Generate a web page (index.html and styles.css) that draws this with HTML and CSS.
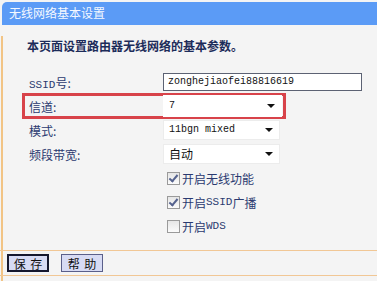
FILE: index.html
```html
<!DOCTYPE html>
<html lang="zh-CN">
<head>
  <meta charset="utf-8"/>
  <title>无线网络基本设置</title>
  <link rel="stylesheet" href="styles.css">
</head>
<body>
  <div class="title">无线网络基本设置</div>
  <div class="panel">
    <p class="intro">本页面设置路由器无线网络的基本参数。</p>
    <div class="form">
      <div class="row">
        <span class="label"><span class="mono">SSID</span>号:</span>
        <span class="input">zonghejiaofei88816619</span>
      </div>
      <div class="row mark">
        <span class="label">信道:</span>
        <span class="select wide">7<i class="arrow"></i></span>
      </div>
      <div class="row">
        <span class="label">模式:</span>
        <span class="select">11bgn mixed<i class="arrow"></i></span>
      </div>
      <div class="row">
        <span class="label">频段带宽:</span>
        <span class="select cn">自动<i class="arrow"></i></span>
      </div>
      <div class="row">
        <span class="label"></span>
        <label class="check"><span class="box on"></span>开启无线功能</label>
      </div>
      <div class="row">
        <span class="label"></span>
        <label class="check"><span class="box on"></span>开启<span class="mono">SSID</span>广播</label>
      </div>
      <div class="row">
        <span class="label"></span>
        <label class="check"><span class="box"></span>开启<span class="mono">WDS</span></label>
      </div>
    </div>
    <div class="actions">
      <button class="btn main">保 存</button>
      <button class="btn">帮 助</button>
    </div>
  </div>
</body>
</html>
```

FILE: styles.css
```css
body {
  margin: 0;
  padding-top: 2px;
  background-color: #f4f4f4;
  font-family: "Noto Sans CJK SC", "Liberation Sans", sans-serif;
  font-size: 12px;
  color: #2b3a70;
}
.title {
  height: 23px;
  line-height: 22px;
  margin-left: 2px;
  padding-left: 7px;
  background-color: #5b9bf6;
  border-top-left-radius: 5px;
  color: #f4f8ff;
  font-size: 12px;
}
.panel {
  margin-left: 1px;
  border-left: 2px solid #f2c485;
  padding-bottom: 5px;
}
.intro {
  margin: 11px 0 0 24px;
  line-height: 20px;
  font-weight: bold;
  color: #1d2c5a;
}
.form {
  margin-top: 14px;
}
.row {
  display: flex;
  align-items: center;
  height: 24px;
  margin-left: 20px;
  padding-left: 6px;
}
.row.mark {
  width: 256px;
  outline: 3px solid #d8434a;
  outline-offset: -2px;
}
.label {
  width: 134px;
  flex-shrink: 0;
}
.label .mono {
  font-size: 11px;
}
.input {
  flex-shrink: 0;
  box-sizing: border-box;
  width: 199px;
  height: 18px;
  padding-left: 4px;
  border: 1px solid #5c6273;
  background: #fff;
  font-family: "Liberation Mono", monospace;
  font-size: 10px;
  line-height: 16px;
  color: #111;
}
.select {
  position: relative;
  flex-shrink: 0;
  box-sizing: border-box;
  width: 117px;
  height: 20px;
  padding-left: 5px;
  background: #fff;
  border: 1px solid #ececec;
  font-family: "Liberation Mono", monospace;
  font-size: 10px;
  line-height: 18px;
  color: #111;
}
.select.wide {
  width: 119px;
  height: 22px;
  line-height: 20px;
  border-color: #fff;
}
.select.cn {
  font-family: "Noto Sans CJK SC", sans-serif;
  font-size: 12px;
}
.arrow {
  position: absolute;
  right: 6px;
  top: 50%;
  margin-top: -2px;
  border-left: 4px solid transparent;
  border-right: 4px solid transparent;
  border-top: 4px solid #111;
}
.check {
  display: flex;
  align-items: center;
  margin-left: 4px;
  color: #2b3a70;
}
.box {
  box-sizing: border-box;
  width: 13px;
  height: 13px;
  margin-right: 2px;
  border: 1px solid #9a9a9a;
  background: linear-gradient(#e6e6e6, #fbfbfb);
  position: relative;
}
.box.on::after {
  content: "";
  position: absolute;
  left: 3px;
  top: 0px;
  width: 3px;
  height: 7px;
  border-right: 2px solid #55628e;
  border-bottom: 2px solid #55628e;
  transform: rotate(40deg);
}
.mono {
  font-family: "Liberation Mono", monospace;
  font-size: 11px;
}
.actions {
  display: flex;
  gap: 12px;
  margin-top: 12px;
  margin-left: -3px;
  padding: 3px 0 3px 7px;
  border-top: 1px solid #f1c795;
  border-bottom: 1px solid #f1c795;
}
.btn {
  box-sizing: border-box;
  width: 42px;
  height: 18px;
  padding: 0 0 0 1px;
  border: 1px solid #5a5f8a;
  background-color: #d7dbf4;
  font-family: "Noto Sans CJK SC", sans-serif;
  font-size: 12px;
  line-height: 15px;
  letter-spacing: 1px;
  color: #111;
}
.btn.main {
  border: 2px solid #15172e;
}
```
